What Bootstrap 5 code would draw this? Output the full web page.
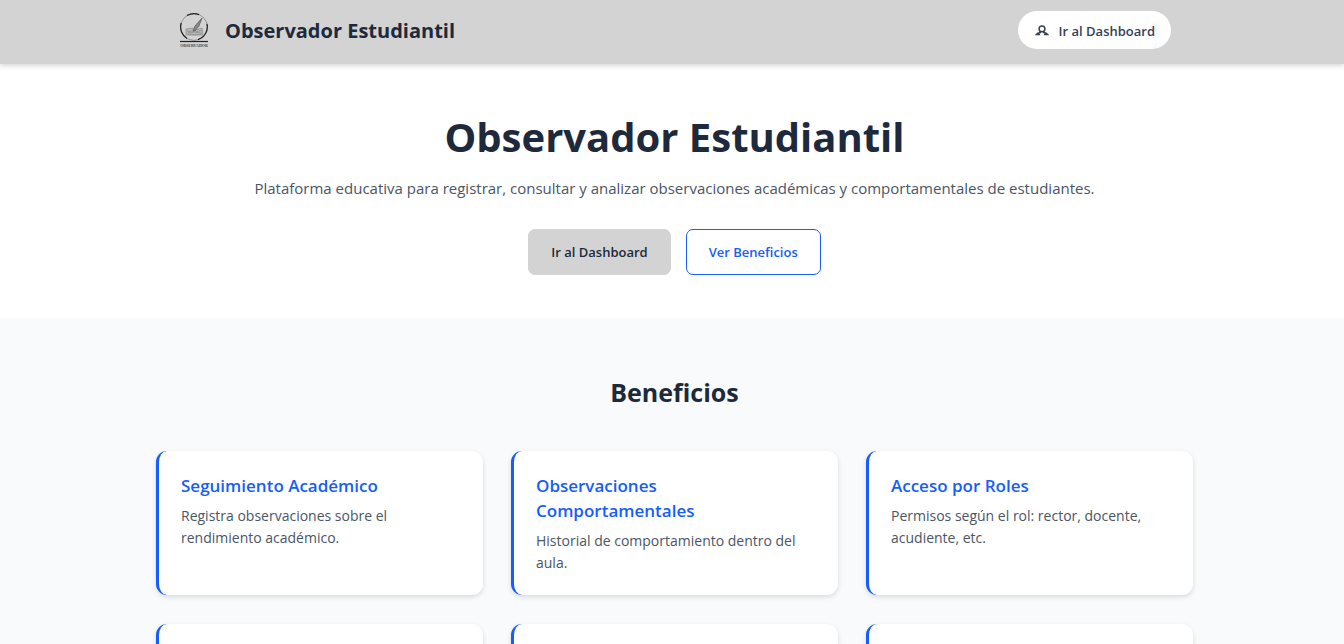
<!DOCTYPE html>
<html lang="es">
<head>
<meta charset="utf-8">
<meta name="viewport" content="width=device-width, initial-scale=1">
<title>Observador Estudiantil</title>
<link href="https://cdn.jsdelivr.net/npm/bootstrap@5.3.0/dist/css/bootstrap.min.css" rel="stylesheet">
<style>
  :root { --ink: #1e293b; --muted: #4a5565; --brand: #155dfc; --bar: #d3d3d3; }
  body { font-family: "Open Sans", "Noto Sans", sans-serif; font-size: 14px; color: var(--ink); background: #f9fafb; }
  .page-width { max-width: 1037px; margin-inline: auto; }
  .gutter { padding-left: 25px; padding-right: 20px; }
  .top-bar { background: var(--bar); min-height: 64px; box-shadow: 0 1px 6px rgba(0,0,0,.2); position: relative; }
  .top-bar .page-width { padding: 11px 22px 15px 23px; }
  .brand-name { font-size: 20px; font-weight: 700; line-height: 28px; padding-top: 2px; color: var(--ink); }
  .pill { background: #fff; color: #364153; font-weight: 600; font-size: 13px; line-height: 20px; padding: 10px 16px 8px 17px; gap: 10px; }
  .pill:hover { background: #f3f4f6; }
  .hero { padding-top: 49px; padding-bottom: 43px; }
  .hero h1 { font-size: 40px; line-height: 48px; font-weight: 700; margin-bottom: 15px; }
  .hero p { font-size: 15px; line-height: 24px; color: var(--muted); margin-bottom: 29px; }
  .hero-actions { gap: 15px; }
  .action { font-size: 13px; font-weight: 600; line-height: 22px; padding: 11px 22px; border-radius: 7px; }
  .action-main, .action-main:hover { background: var(--bar); border-color: var(--bar); color: #1e2939; }
  .action-alt { border-color: var(--brand); color: var(--brand); background: #fff; }
  .action-alt:hover { background: #eff6ff; color: var(--brand); border-color: var(--brand); }
  .benefits { padding-top: 58px; padding-bottom: 58px; }
  .benefits h2 { font-size: 25px; line-height: 32px; font-weight: 700; margin-bottom: 43px; }
  .benefit-grid { display: grid; grid-template-columns: repeat(auto-fit, minmax(280px, 1fr)); gap: 29px 28px; }
  .benefit { border: 0; border-left: 3px solid var(--brand); border-radius: 11px; padding: 22px 22px 21px; min-height: 144px; box-shadow: 0 2px 5px rgba(0,0,0,.13); }
  .benefit h3 { font-size: 17px; line-height: 25px; font-weight: 600; color: var(--brand); margin-bottom: 7px; }
  .benefit p { font-size: 14px; line-height: 22px; color: var(--muted); margin: 0; }
</style>
</head>
<body>
<header class="top-bar gutter">
  <div class="page-width d-flex justify-content-between align-items-center">
    <a href="#" class="d-flex align-items-center gap-3 text-decoration-none">
      <svg width="30" height="36" viewBox="0 0 30 36" aria-hidden="true">
        <circle cx="15" cy="15" r="13.4" fill="none" stroke="#777" stroke-width=".7"/>
        <path d="M8 3.6A13.4 13.4 0 0 1 20 2.6M28 12A13.4 13.4 0 0 1 19 27.6M2.2 11A13.4 13.4 0 0 0 8 26.4" fill="none" stroke="#222" stroke-width="1.2"/>
        <path d="M7 17l7-1 2 2 7-2 1 6-8 1-9-1zM6 23h18M8 19l6 1M9 21l6-1 7 1M17 20l6-2" fill="#b5b5b5" stroke="#8c8c8c" stroke-width=".7"/>
        <path d="M14 19l2-5 7-8-3 8-4 5z" fill="#888" stroke="#555" stroke-width=".7"/>
        <path d="M1 29.5h28" stroke="#222" stroke-width="1.2"/>
        <text x="15" y="35" text-anchor="middle" font-family="Liberation Serif, serif" font-size="4" font-weight="700" fill="#444">OBSERVADOR</text>
      </svg>
      <span class="brand-name">Observador Estudiantil</span>
    </a>
    <a href="#" class="btn pill rounded-pill border-0 d-inline-flex align-items-center">
      <svg width="14" height="14" viewBox="0 0 14 14" fill="none" stroke="#364153" stroke-width="1.5" aria-hidden="true">
        <circle cx="7" cy="4.9" r="2.9"/>
        <path d="M5.3 7.3v1.3C3.4 8.9 2.2 9.4 1.4 10.4H5M8.7 7.3v1.3c1.9.3 3.1.8 3.9 1.8H9"/>
      </svg>
      Ir al Dashboard
    </a>
  </div>
</header>
<main>
  <section class="hero gutter bg-white text-center">
    <h1>Observador Estudiantil</h1>
    <p>Plataforma educativa para registrar, consultar y analizar observaciones académicas y comportamentales de estudiantes.</p>
    <div class="hero-actions d-flex flex-wrap justify-content-center">
      <a href="#" class="btn action action-main">Ir al Dashboard</a>
      <a href="#beneficios" class="btn action action-alt">Ver Beneficios</a>
    </div>
  </section>
  <section id="beneficios" class="benefits gutter">
    <div class="page-width">
      <h2 class="text-center">Beneficios</h2>
      <div class="benefit-grid">
        <article class="card benefit"><h3>Seguimiento Académico</h3><p>Registra observaciones sobre el rendimiento académico.</p></article>
        <article class="card benefit"><h3>Observaciones Comportamentales</h3><p>Historial de comportamiento dentro del aula.</p></article>
        <article class="card benefit"><h3>Acceso por Roles</h3><p>Permisos según el rol: rector, docente, acudiente, etc.</p></article>
        <article class="card benefit"></article>
        <article class="card benefit"></article>
        <article class="card benefit"></article>
      </div>
    </div>
  </section>
</main>
<script src="https://cdn.jsdelivr.net/npm/bootstrap@5.3.0/dist/js/bootstrap.bundle.min.js"></script>
</body>
</html>
